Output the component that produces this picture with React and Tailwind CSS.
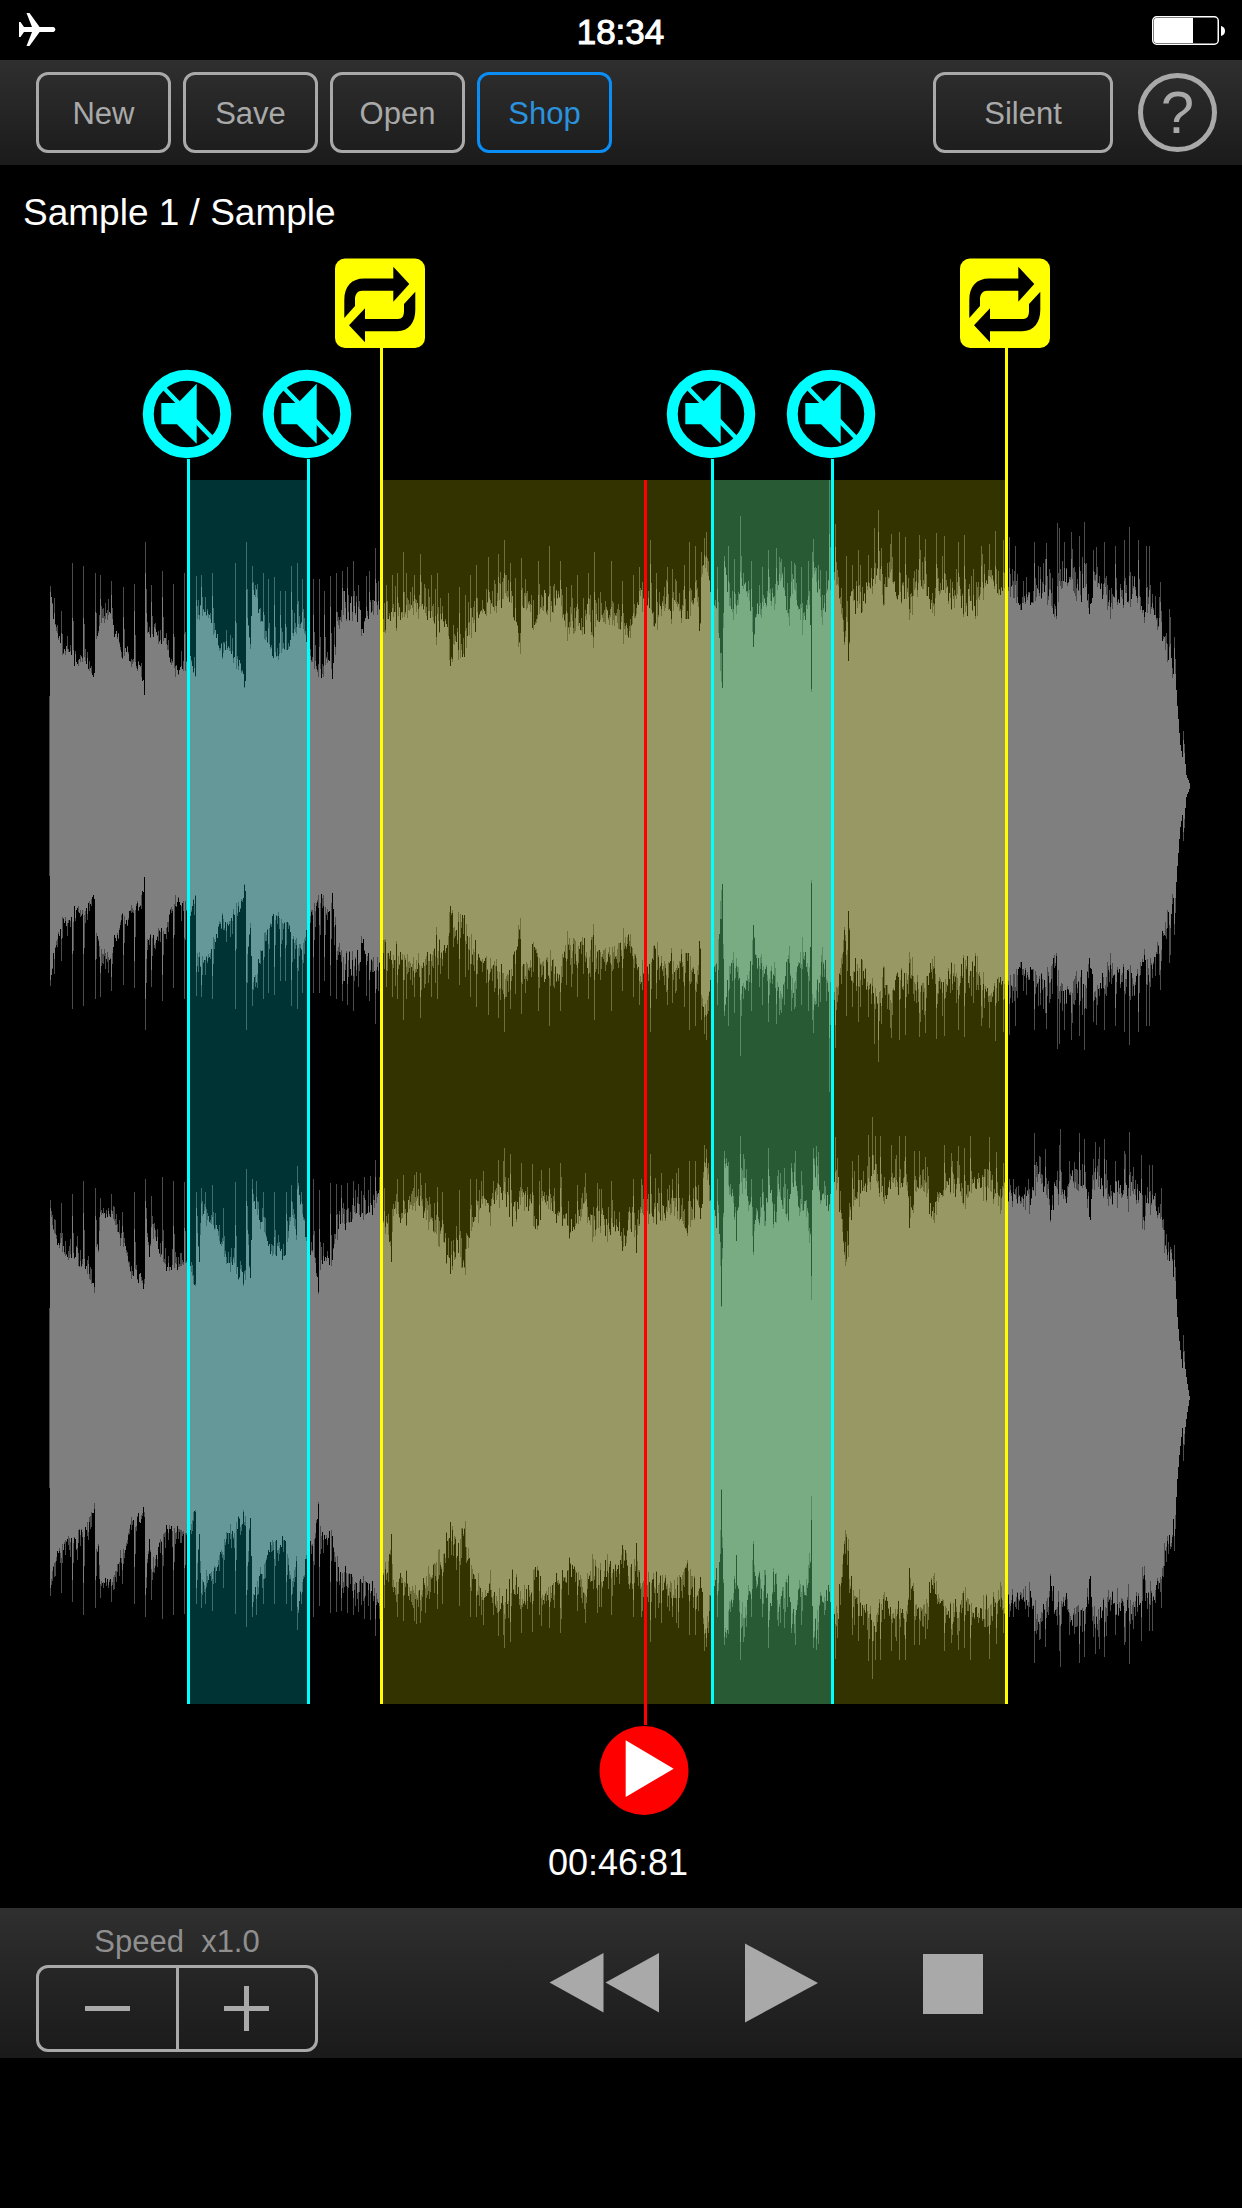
import React from "react";

const TRACK_WIDTH = 1242;
const CHANNEL_HEIGHT = 612;

/* Envelope points: x, half height of the solid body. */
const LEFT_BODY = [
  50, 187, 53, 169, 57, 147, 62, 136, 70, 132, 77, 120, 85, 124, 90, 112, 94, 106, 95, 143, 99, 155, 103, 165, 110, 165,
  114, 155, 118, 143, 122, 126, 127, 132, 130, 120, 138, 116, 142, 104, 144, 90, 145, 175, 147, 155, 150, 147, 155, 151,
  160, 139, 166, 139, 170, 122, 173, 114, 180, 114, 184, 110, 189, 130, 193, 112, 195, 108, 196, 155, 200, 175, 204, 175,
  210, 163, 216, 147, 220, 132, 226, 136, 232, 130, 238, 120, 243, 108, 245, 100, 246, 175, 250, 136, 252, 195, 256, 191,
  260, 167, 264, 143, 268, 136, 274, 124, 280, 132, 288, 136, 292, 147, 298, 159, 302, 163, 306, 136, 310, 126, 316, 116,
  319, 108, 324, 116, 330, 126, 332, 104, 334, 139, 339, 155, 342, 183, 348, 171, 354, 175, 362, 159, 370, 167, 376, 179,
  382, 163, 400, 163, 410, 175, 420, 167, 430, 163, 436, 151, 442, 167, 447, 143, 450, 104, 453, 132, 457, 143, 459, 112,
  462, 136, 464, 124, 468, 147, 472, 159, 480, 171, 490, 171, 496, 183, 505, 187, 512, 175, 517, 159, 519, 128, 520, 126,
  521, 179, 530, 171, 536, 159, 545, 183, 550, 173, 560, 183, 566, 155, 575, 159, 581, 150, 588, 179, 593, 136, 594, 150,
  598, 163, 610, 159, 620, 155, 627, 147, 633, 159, 640, 183, 648, 175, 655, 159, 662, 179, 672, 171, 680, 163, 690, 167,
  696, 183, 700, 155, 702, 211, 706, 219, 710, 187, 715, 175, 719, 155, 721, 92, 722, 96, 724, 219, 728, 179, 736, 167,
  741, 199, 748, 187, 753, 139, 755, 167, 762, 167, 768, 195, 775, 171, 780, 203, 785, 187, 789, 159, 792, 203, 798, 171,
  802, 159, 807, 183, 810, 160, 811, 92, 812, 191, 815, 203, 820, 187, 822, 171, 828, 191, 834, 203, 839, 191, 842, 155,
  845, 132, 847, 155, 848, 120, 850, 179, 856, 183, 863, 171, 868, 199, 874, 195, 878, 211, 884, 187, 890, 203, 897, 183,
  905, 190, 910, 171, 915, 199, 922, 195, 929, 183, 932, 163, 937, 195, 945, 187, 950, 183, 957, 190, 963, 175, 970, 183,
  975, 171, 980, 191, 990, 199, 1000, 187, 1005, 191, 1010, 187, 1018, 179, 1026, 183, 1033, 179, 1040, 195, 1046, 191,
  1053, 171, 1058, 180, 1062, 199, 1069, 203, 1076, 183, 1084, 199, 1089, 171, 1095, 203, 1103, 187, 1110, 175, 1118, 191,
  1128, 179, 1135, 195, 1143, 167, 1150, 175, 1157, 167, 1160, 155, 1165, 136, 1168, 116, 1170, 132, 1173, 112, 1175, 112,
  1177, 80, 1179, 53, 1180, 41, 1182, 29, 1184, 33, 1186, 11, 1189, 3,
];

const LEFT_PEAKS = [
  50, 200, 61, 175, 72, 223, 83, 220, 95, 213, 100, 211, 111, 205, 123, 199, 134, 202, 145, 244, 151, 201, 162, 215, 173,
  202, 184, 213, 196, 210, 201, 211, 212, 213, 235, 223, 246, 244, 252, 220, 263, 213, 268, 207, 274, 209, 280, 195, 285,
  195, 291, 220, 297, 223, 302, 207, 313, 207, 319, 207, 324, 195, 330, 210, 336, 213, 342, 215, 347, 219, 353, 225, 358,
  201, 369, 215, 375, 238, 386, 201, 392, 211, 397, 213, 403, 234, 406, 213, 414, 211, 420, 232, 431, 211, 437, 213, 448,
  193, 459, 199, 465, 191, 470, 211, 476, 221, 488, 229, 498, 232, 504, 246, 510, 223, 521, 228, 538, 225, 549, 240, 560,
  225, 566, 199, 571, 201, 577, 211, 588, 213, 594, 234, 611, 225, 622, 205, 633, 211, 639, 219, 650, 246, 656, 213, 667,
  219, 672, 217, 684, 221, 689, 244, 695, 240, 701, 234, 704, 248, 706, 254, 717, 219, 724, 230, 728, 240, 734, 227, 740,
  270, 751, 225, 762, 219, 768, 236, 776, 238, 779, 229, 791, 225, 801, 219, 808, 225, 813, 247, 829, 306, 835, 262, 846,
  230, 852, 221, 858, 236, 874, 258, 878, 276, 881, 238, 891, 252, 899, 254, 905, 249, 919, 251, 925, 247, 936, 253, 944,
  250, 958, 244, 964, 251, 981, 240, 989, 242, 995, 255, 1003, 246, 1009, 249, 1015, 240, 1034, 244, 1046, 243, 1057, 263,
  1059, 258, 1071, 254, 1079, 250, 1084, 264, 1093, 236, 1104, 244, 1115, 240, 1124, 246, 1129, 259, 1138, 246, 1146, 240,
  1149, 240, 1160, 204, 1169, 177, 1174, 149, 1183, 55,
];

const RIGHT_BODY = [
  50, 180, 54, 164, 58, 150, 66, 140, 72, 136, 76, 148, 80, 128, 84, 136, 88, 125, 92, 109, 94, 103, 95, 164, 98, 140, 100,
  180, 107, 184, 112, 176, 118, 160, 124, 152, 128, 132, 131, 117, 136, 125, 140, 117, 144, 105, 145, 180, 149, 140, 152,
  168, 157, 152, 161, 136, 166, 128, 172, 125, 176, 132, 182, 128, 188, 140, 192, 121, 195, 111, 196, 180, 199, 136, 201,
  184, 208, 176, 216, 164, 222, 148, 230, 132, 235, 128, 240, 121, 245, 115, 246, 184, 250, 117, 252, 196, 258, 180, 264,
  164, 272, 136, 278, 148, 284, 140, 288, 164, 291, 180, 296, 160, 298, 204, 302, 180, 307, 152, 312, 140, 316, 125, 318,
  101, 321, 132, 327, 136, 331, 128, 334, 148, 339, 176, 345, 172, 354, 176, 362, 184, 370, 180, 378, 188, 386, 172, 391,
  144, 394, 184, 402, 176, 410, 188, 418, 184, 426, 176, 434, 164, 441, 160, 448, 136, 452, 125, 456, 148, 460, 140, 464,
  125, 468, 152, 474, 176, 482, 192, 488, 180, 496, 192, 504, 204, 512, 180, 520, 192, 530, 188, 537, 176, 545, 192, 556,
  180, 566, 176, 573, 160, 580, 176, 586, 184, 593, 160, 602, 176, 610, 160, 618, 164, 625, 152, 630, 176, 637, 152, 642,
  184, 648, 172, 655, 184, 662, 172, 668, 184, 676, 184, 684, 172, 688, 156, 692, 184, 697, 196, 700, 172, 703, 215, 706,
  227, 709, 196, 713, 184, 718, 176, 720, 125, 721, 89, 723, 180, 724, 231, 730, 200, 736, 164, 740, 208, 744, 212, 750,
  184, 753, 140, 756, 176, 764, 176, 769, 204, 775, 168, 778, 208, 783, 188, 788, 172, 791, 223, 796, 208, 799, 176, 804,
  188, 808, 164, 810, 160, 811, 89, 812, 200, 813, 231, 816, 227, 820, 192, 828, 184, 832, 208, 838, 204, 843, 152, 845,
  117, 848, 144, 850, 184, 856, 196, 862, 206, 870, 204, 874, 223, 879, 204, 884, 192, 890, 208, 898, 204, 904, 212, 910,
  170, 914, 204, 922, 208, 930, 192, 933, 176, 937, 192, 945, 204, 952, 219, 958, 200, 964, 184, 970, 204, 980, 208, 990,
  204, 997, 196, 1001, 176, 1004, 204, 1014, 200, 1022, 188, 1030, 192, 1036, 215, 1044, 208, 1050, 184, 1056, 204, 1066,
  192, 1070, 212, 1080, 204, 1086, 204, 1090, 172, 1094, 215, 1102, 204, 1112, 192, 1120, 204, 1128, 196, 1134, 204, 1140,
  188, 1144, 164, 1148, 192, 1156, 184, 1161, 176, 1164, 152, 1168, 132, 1170, 140, 1173, 121, 1175, 117, 1177, 81, 1179,
  57, 1182, 30, 1184, 36, 1187, 14, 1189, 2,
];

const RIGHT_PEAKS = [
  50, 198, 61, 195, 72, 204, 83, 217, 95, 210, 100, 200, 111, 204, 122, 186, 134, 206, 145, 219, 151, 202, 162, 221, 173,
  217, 184, 216, 196, 206, 201, 210, 205, 206, 212, 213, 223, 190, 235, 216, 246, 229, 252, 219, 256, 217, 263, 206, 274,
  206, 286, 206, 291, 213, 297, 232, 301, 206, 313, 219, 319, 208, 330, 215, 336, 214, 341, 213, 347, 215, 353, 217, 358,
  214, 364, 221, 375, 238, 379, 221, 397, 219, 403, 223, 414, 223, 420, 225, 425, 215, 437, 211, 442, 206, 459, 208, 470,
  219, 476, 219, 481, 217, 498, 238, 504, 250, 510, 244, 521, 235, 532, 234, 541, 228, 549, 230, 560, 235, 577, 213, 585,
  225, 597, 215, 611, 217, 633, 219, 650, 244, 661, 225, 672, 219, 678, 230, 689, 237, 695, 237, 704, 253, 706, 249, 717,
  219, 724, 247, 740, 262, 744, 239, 751, 219, 762, 219, 768, 250, 777, 222, 791, 235, 794, 235, 801, 227, 813, 250, 816,
  252, 835, 261, 852, 237, 858, 243, 868, 263, 872, 281, 875, 262, 880, 262, 891, 253, 899, 262, 905, 262, 914, 247, 919,
  247, 925, 241, 944, 253, 952, 237, 958, 252, 964, 250, 970, 262, 989, 261, 996, 246, 1003, 235, 1034, 265, 1045, 249,
  1059, 253, 1060, 269, 1079, 265, 1084, 259, 1093, 239, 1104, 259, 1115, 237, 1124, 247, 1129, 266, 1141, 243, 1149, 233,
  1161, 194, 1174, 153, 1183, 63,
];

function makeRandom(seed) {
  let s = seed;
  return () => {
    s = (s * 1664525 + 1013904223) >>> 0;
    return s / 4294967296;
  };
}

function buildChannel(body, peaks, centre, seed) {
  const random = makeRandom(seed);
  const peakAt = new Map();
  for (let i = 0; i < peaks.length; i += 2) peakAt.set(peaks[i], peaks[i + 1]);

  let seg = 0;
  let solid = "";
  let soft = `M49 ${centre - 90}h1v180h-1z`;
  for (let x = 50; x < 1190; x++) {
    while (seg + 3 < body.length - 2 && body[seg + 2] <= x) seg += 2;
    const [x0, h0, x1, h1] = body.slice(seg, seg + 4);
    const t = Math.min(1, (x - x0) / (x1 - x0));
    const base = h0 + (h1 - h0) * t;
    const rough = x > 1172 ? 0 : x < 330 ? 0.6 : 1.1;

    const jitter = random();
    let inner = base + rough * (jitter < 0.2 ? -jitter * 50 : jitter * jitter * 16);
    let outer = inner + rough * Math.pow(random(), 3) * 28;
    if (peakAt.has(x)) {
      const peak = peakAt.get(x);
      outer = Math.max(outer, peak);
      inner = Math.max(inner, base + (peak - base) * (0.25 + random() * 0.45));
    } else if (peakAt.has(x - 1)) {
      outer = Math.max(outer, base + (peakAt.get(x - 1) - base) * 0.4);
    }
    const a = Math.round(inner);
    const b = Math.round(outer);
    solid += `M${x} ${centre - a}h1v${2 * a}h-1z`;
    if (b > a) soft += `M${x} ${centre - b}h1v${b - a}h-1zM${x} ${centre + a}h1v${b - a}h-1z`;
  }
  return { solid, soft };
}

const CHANNELS = [
  { name: "left", ...buildChannel(LEFT_BODY, LEFT_PEAKS, CHANNEL_HEIGHT / 2, 7) },
  { name: "right", ...buildChannel(RIGHT_BODY, RIGHT_PEAKS, CHANNEL_HEIGHT * 1.5, 29) },
];

const percent = (x) => `${(x / TRACK_WIDTH) * 100}%`;

const LOOP_MARKERS = [380, 1005];
const MUTE_MARKERS = [187, 307, 711, 831];
const PLAYHEAD = 644;

const REGIONS = [
  { from: 380, to: 1005, tint: "bg-[#ffff00]/20" },
  { from: 187, to: 307, tint: "bg-[#00ffff]/20" },
  { from: 711, to: 831, tint: "bg-[#00ffff]/20" },
];

function AirplaneIcon() {
  return (
    <svg viewBox="0 0 38 34" className="h-[34px] w-[38px]" fill="white" role="img" aria-label="Airplane mode">
      <path d="M0 9H1.5L5 14H13L7.5 0H10.5L20.6 14H34.5A2.6 2.6 0 0 1 34.5 19H20.6L10.5 33H7.5L13 19H5L1.5 24H0Z" />
    </svg>
  );
}

function BatteryIcon() {
  return (
    <svg viewBox="0 0 74 29" className="h-[29px] w-[74px]" role="img" aria-label="Battery">
      <rect x="0.75" y="0.75" width="65.5" height="27.5" rx="4" fill="none" stroke="white" strokeWidth="1.5" />
      <path d="M4 2H41V27H4Q2 27 2 25V4Q2 2 4 2Z" fill="white" />
      <path d="M69 10Q73 11 73 15Q73 19 69 20Z" fill="white" />
    </svg>
  );
}

function LoopIcon() {
  return (
    <svg viewBox="0 0 90 90" className="size-[90px]" aria-hidden="true">
      <rect y="0.5" width="90" height="89.5" rx="10" fill="#ffff00" />
      <path d="M9.3 60V42C9.3 28 17 20.5 29 20.5H58.3V8.7L74.3 26L58.3 43.7V32.7H27C23 32.7 20 36 20 41V48Z" />
      <path d="M80.3 33.7V52C80.3 64 74 73.3 62 73.3H30V84.3L14 67.3L30 50.3V61H63C67 61 69 58 69 53V46Z" />
    </svg>
  );
}

function MuteIcon() {
  return (
    <svg viewBox="0 0 90 90" className="size-[90px]" aria-hidden="true">
      <circle cx="45" cy="45" r="38.75" fill="black" stroke="#00ffff" strokeWidth="11" />
      <path d="M20 17L72 71" stroke="#00ffff" strokeWidth="4.5" />
      <path d="M19.3 34H36L54.7 14.7V74.7L35 55.3H19.3Z" fill="#00ffff" />
    </svg>
  );
}

function Marker({ x, top, line, label, children }) {
  return (
    <div className={`absolute flex w-[3px] flex-col items-start ${top}`} style={{ left: percent(x) }}>
      <button type="button" aria-label={label} className="w-[90px] shrink-0 -translate-x-1/2">
        {children}
      </button>
      <span className={`w-[3px] flex-1 ${line}`} />
    </div>
  );
}

function ToolbarButton({ children, wide, accent }) {
  return (
    <button
      type="button"
      className={`h-[81px] rounded-xl border-[3px] pt-1 text-[31px] ${wide ? "w-[180px]" : "w-[135px]"} ${
        accent ? "border-[#0a8df5] text-[#2b92de]" : "border-[#a9a9a9] text-[#a9a9a9]"
      }`}
    >
      {children}
    </button>
  );
}

export default function App() {
  return (
    <div className="min-h-screen bg-black font-['Liberation_Sans',Arial,sans-serif] text-white">
      <div className="grid h-[60px] grid-cols-3 items-center pr-4 pl-[19px]">
        <AirplaneIcon />
        <span className="pt-1 pr-1 text-center text-[35px] leading-[42px] [-webkit-text-stroke:1px_white]">18:34</span>
        <span className="justify-self-end">
          <BatteryIcon />
        </span>
      </div>

      <header className="flex items-center gap-3 bg-linear-to-b from-[#2f2f2f] to-[#1b1b1b] py-3 pr-[25px] pl-9">
        <ToolbarButton>New</ToolbarButton>
        <ToolbarButton>Save</ToolbarButton>
        <ToolbarButton>Open</ToolbarButton>
        <ToolbarButton accent>Shop</ToolbarButton>
        <div className="ml-auto flex items-center gap-[25px]">
          <ToolbarButton wide>Silent</ToolbarButton>
          <button
            type="button"
            aria-label="Help"
            className="flex size-[79px] items-center justify-center rounded-full border-[5px] border-[#a9a9a9] text-[60px] leading-none text-[#a9a9a9]"
          >
            ?
          </button>
        </div>
      </header>

      <main>
        <h1 className="px-[23px] pt-[26px] pb-[5px] text-[37px] leading-[44px]">Sample 1 / Sample</h1>

        <section aria-label="Waveform" className="relative pt-[240px] pb-[111px]">
          <div className="relative">
            <svg
              viewBox="0 0 1242 1224"
              preserveAspectRatio="none"
              className="block h-[1224px] w-full"
              shapeRendering="crispEdges"
              role="img"
              aria-label="Stereo waveform"
            >
              {CHANNELS.map((c) => (
                <g key={c.name} fill="#7f7f7f">
                  <path d={c.soft} fillOpacity="0.6" />
                  <path d={c.solid} />
                </g>
              ))}
            </svg>
            {REGIONS.map((r) => (
              <div
                key={r.from}
                className={`absolute inset-y-0 ${r.tint}`}
                style={{ left: percent(r.from), width: percent(r.to - r.from) }}
              />
            ))}
          </div>

          {LOOP_MARKERS.map((x, i) => (
            <Marker key={x} x={x} top="top-[18px] bottom-[111px]" line="bg-[#ffff00]" label={`Loop point ${i + 1}`}>
              <LoopIcon />
            </Marker>
          ))}
          {MUTE_MARKERS.map((x, i) => (
            <Marker key={x} x={x} top="top-[129px] bottom-[111px]" line="bg-[#00ffff]" label={`Mute point ${i + 1}`}>
              <MuteIcon />
            </Marker>
          ))}
          <div
            className="absolute top-[240px] bottom-0 flex w-[3px] flex-col items-start"
            style={{ left: percent(PLAYHEAD) }}
          >
            <span className="w-[3px] flex-1 bg-[#ff0000]" />
            <button type="button" aria-label="Playback position" className="w-[90px] shrink-0 -translate-x-1/2">
              <svg viewBox="0 0 90 90" className="size-[90px]" aria-hidden="true">
                <circle cx="45" cy="45.5" r="44.5" fill="#ff0000" />
                <path d="M26.7 15.3L74.7 43.7L26.7 72Z" fill="white" />
              </svg>
            </button>
          </div>
        </section>

        <p className="pt-[27px] pr-1.5 pb-6 text-center text-[36px] leading-[42px]">00:46:81</p>
      </main>

      <footer className="flex items-center bg-linear-to-b from-[#2f2f2f] to-[#1a1a1a] px-9">
        <div className="w-[282px] pt-4 pb-[6px]">
          <div id="speed" className="mb-[5px] text-center text-[31px] leading-[36px] whitespace-pre text-[#8f8f8f]">
            {"Speed  x1.0"}
          </div>
          <div
            role="group"
            aria-labelledby="speed"
            className="flex h-[87px] divide-x-[3px] divide-[#a9a9a9] rounded-xl border-[3px] border-[#a9a9a9]"
          >
            <button type="button" aria-label="Slower" className="flex flex-1 items-center justify-center">
              <svg viewBox="0 0 45 45" className="size-[45px]" fill="#a9a9a9" aria-hidden="true">
                <rect y="20" width="45" height="5" />
              </svg>
            </button>
            <button type="button" aria-label="Faster" className="flex flex-1 items-center justify-center">
              <svg viewBox="0 0 45 45" className="size-[45px]" fill="#a9a9a9" aria-hidden="true">
                <rect y="20" width="45" height="5" />
                <rect x="20" width="5" height="45" />
              </svg>
            </button>
          </div>
        </div>

        <div className="ml-[230px] flex items-center gap-[62px]">
          <button type="button" aria-label="Rewind">
            <svg viewBox="0 0 112 82" className="h-[82px] w-[112px]" fill="#a9a9a9" aria-hidden="true">
              <path d="M1.5 40.5L55.5 11V70.5ZM57.5 40.5L111 11V70.5Z" />
            </svg>
          </button>
          <button type="button" aria-label="Play">
            <svg viewBox="0 0 112 82" className="h-[82px] w-[112px]" fill="#a9a9a9" aria-hidden="true">
              <path d="M23 1.5L96 41L23 80.5Z" />
            </svg>
          </button>
          <button type="button" aria-label="Stop">
            <svg viewBox="0 0 112 82" className="h-[82px] w-[112px]" fill="#a9a9a9" aria-hidden="true">
              <rect x="27" y="12" width="60" height="60" />
            </svg>
          </button>
        </div>
      </footer>
    </div>
  );
}
